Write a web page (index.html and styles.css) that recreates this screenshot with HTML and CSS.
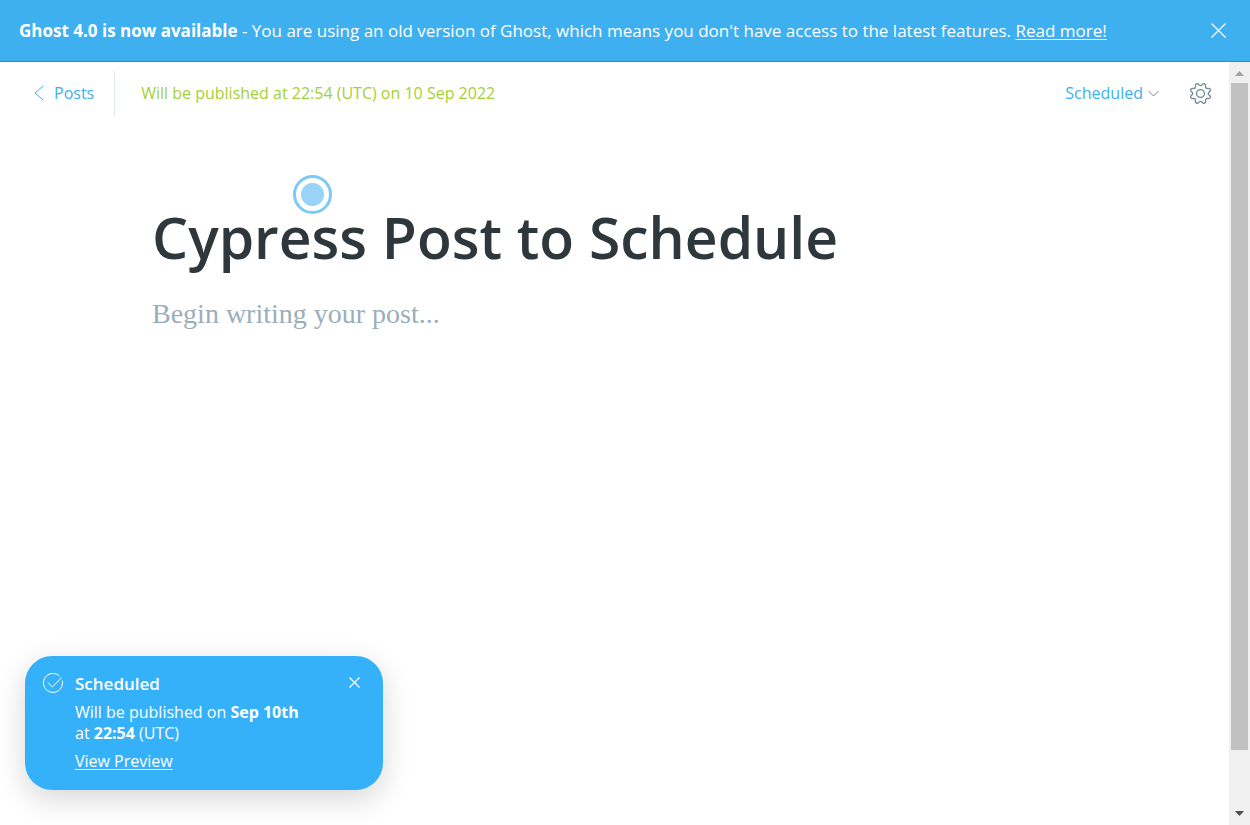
FILE: index.html
```html
<!DOCTYPE html>
<html lang="en">
<head>
<meta charset="utf-8">
<meta name="viewport" content="width=device-width, initial-scale=1">
<title>Cypress Post to Schedule</title>
<link rel="stylesheet" href="styles.css">
</head>
<body>
<div class="app">
  <aside class="banner">
    <p class="banner-text"><strong>Ghost 4.0 is now available</strong> - You are using an old version of Ghost, which means you don't have access to the latest features. <a href="#update">Read more!</a></p>
    <button class="icon-button" type="button" aria-label="Close banner">
      <svg width="15" height="15" viewBox="0 0 15 15"><path d="M.5.5l14 14M14.5.5l-14 14"/></svg>
    </button>
  </aside>
  <div class="viewport">
    <main class="editor">
      <header class="toolbar">
        <a class="back" href="#posts">
          <svg width="10" height="16" viewBox="0 0 10 16"><path d="M9 1L1 8l8 7"/></svg>
          Posts
        </a>
        <div class="status">Will be published at 22:54 (UTC) on 10 Sep 2022</div>
        <button class="schedule" type="button">Scheduled
          <svg width="11" height="7" viewBox="0 0 11 7"><path d="M.5 1l5 5 5-5"/></svg>
        </button>
        <button class="icon-button settings" type="button" aria-label="Settings">
          <svg width="21" height="21" viewBox="0 0 24 24"><path d="M10.546 2.438a1.957 1.957 0 0 0 2.908 0L14.400 1.400a1.959 1.959 0 0 1 3.410 1.413l-.071 1.400a1.958 1.958 0 0 0 2.051 2.054l1.400-.071a1.959 1.959 0 0 1 1.410 3.410l-1.042.940a1.960 1.960 0 0 0 0 2.909l1.042.945a1.959 1.959 0 0 1-1.413 3.410l-1.400-.071a1.958 1.958 0 0 0-2.056 2.056l.071 1.400A1.959 1.959 0 0 1 14.400 22.600l-.941-1.041a1.959 1.959 0 0 0-2.908 0L9.606 22.600A1.959 1.959 0 0 1 6.200 21.192l.072-1.400a1.958 1.958 0 0 0-2.056-2.056l-1.400.071A1.958 1.958 0 0 1 1.400 14.400l1.041-.940a1.960 1.960 0 0 0 0-2.909L1.400 9.606A1.958 1.958 0 0 1 2.809 6.200l1.400.071a1.958 1.958 0 0 0 2.058-2.060L6.200 2.810A1.959 1.959 0 0 1 9.606 1.400Z"/><circle cx="12" cy="12" r="4.500"/></svg>
        </button>
      </header>
      <article class="post">
        <h1 class="title">Cypress Post to Schedule</h1>
        <p class="placeholder">Begin writing your post...</p>
        <span class="pointer"></span>
      </article>
      <section class="toast" role="status">
        <svg class="toast-icon" width="20" height="20" viewBox="0 0 20 20"><path d="M19.200 7.700A9.500 9.500 0 1 1 16.500 3M5 9.500L9.200 14l9.500-9.300"/></svg>
        <div class="toast-body">
          <h2 class="toast-title">Scheduled</h2>
          <p class="toast-text">Will be published on <strong>Sep 10th</strong><br>at <strong>22:54</strong> (UTC)</p>
          <a href="#preview">View Preview</a>
        </div>
        <button class="icon-button" type="button" aria-label="Dismiss">
          <svg width="11" height="11" viewBox="0 0 11 11"><path d="M.5.5l10 10M10.500.5l-10 10"/></svg>
        </button>
      </section>
    </main>
    <div class="scrollbar" aria-hidden="true">
      <svg class="arrow-up" width="9" height="5" viewBox="0 0 9 5"><path d="M0 5L4.500 0 9 5z"/></svg>
      <div class="track"><div class="thumb"></div></div>
      <svg class="arrow-down" width="9" height="5" viewBox="0 0 9 5"><path d="M0 0l4.500 5L9 0z"/></svg>
    </div>
  </div>
</div>
</body>
</html>
```
FILE: styles.css
```css
* {
  box-sizing: border-box;
}

body {
  margin: 0;
  background: #fff;
  font-family: "Open Sans", "Noto Sans", sans-serif;
  font-size: 16px;
}

h1, h2, p {
  margin: 0;
}

svg {
  display: block;
  flex: none;
  fill: none;
  stroke: currentColor;
}

button {
  padding: 0;
  border: 0;
  background: none;
  color: inherit;
  font: inherit;
  cursor: pointer;
}

.app {
  display: flex;
  flex-direction: column;
  height: 100vh;
}

.banner {
  display: flex;
  align-items: center;
  justify-content: space-between;
  gap: 24px;
  padding: 18px 24px 18px 19px;
  border-bottom: 1px solid #1593e6;
  background: #3eb0ef;
  color: #fff;
  font-size: 17px;
  line-height: 25px;
}

.banner svg,
.toast .icon-button svg {
  stroke-width: 1.2;
}

.banner a,
.toast a {
  color: inherit;
  text-underline-offset: 2px;
}

.viewport {
  display: flex;
  flex: 1;
  min-height: 0;
}

.editor {
  position: relative;
  flex: 1;
  min-width: 0;
}

.toolbar {
  display: flex;
  align-items: center;
  padding: 8px 18px 0 34px;
  color: #3eb0ef;
}

.back {
  display: flex;
  align-items: center;
  gap: 10px;
  height: 46px;
  padding-right: 20px;
  border-right: 1px solid #e3ebf1;
  color: inherit;
  text-decoration: none;
}

.status {
  margin-left: 26px;
  color: #a4d037;
}

.schedule {
  display: flex;
  align-items: center;
  gap: 5px;
  margin-left: auto;
}

.schedule svg {
  color: #738a94;
}

.settings {
  margin-left: 31px;
  color: #738a94;
}

.settings svg {
  stroke-width: 1.5;
}

.post {
  position: relative;
  padding: 83px 152px 0;
}

.title {
  color: #2e373c;
  font-size: 57px;
  font-weight: 600;
  line-height: 76px;
}

.placeholder {
  margin-top: 20px;
  color: #9baeb8;
  font-family: Georgia, "Liberation Serif", serif;
  font-size: 28px;
  line-height: 38px;
}

.pointer {
  position: absolute;
  top: 59px;
  left: 293px;
  width: 39px;
  height: 39px;
  border: 3px solid #7ccaf5;
  border-radius: 50%;
  background: radial-gradient(circle, #99d4f8 11px, #fff 12px);
}

.toast {
  position: absolute;
  bottom: 35px;
  left: 25px;
  display: flex;
  align-items: flex-start;
  gap: 12px;
  width: 358px;
  padding: 17px 23px 18px 18px;
  border-radius: 27px;
  background: #35b1f9;
  box-shadow: 0 9px 30px rgba(0, 0, 0, 0.16);
  color: #fff;
  line-height: 21px;
}

.toast-body {
  flex: 1;
}

.toast-title {
  font-size: 17px;
  font-weight: 600;
  line-height: 22px;
}

.toast-text {
  margin: 7px 0;
}

.toast .icon-button {
  margin-top: 4px;
}

.scrollbar {
  display: flex;
  flex-direction: column;
  align-items: center;
  justify-content: space-between;
  width: 21px;
  padding: 9px 2px;
  background: #f0f0f0;
}

.scrollbar svg {
  stroke: none;
  fill: #a3a3a3;
}

.scrollbar .arrow-down {
  fill: #505050;
}

.track {
  flex: 1;
  align-self: stretch;
  margin: 7px 0;
}

.thumb {
  height: 92.5%;
  background: #c1c1c1;
}
```
